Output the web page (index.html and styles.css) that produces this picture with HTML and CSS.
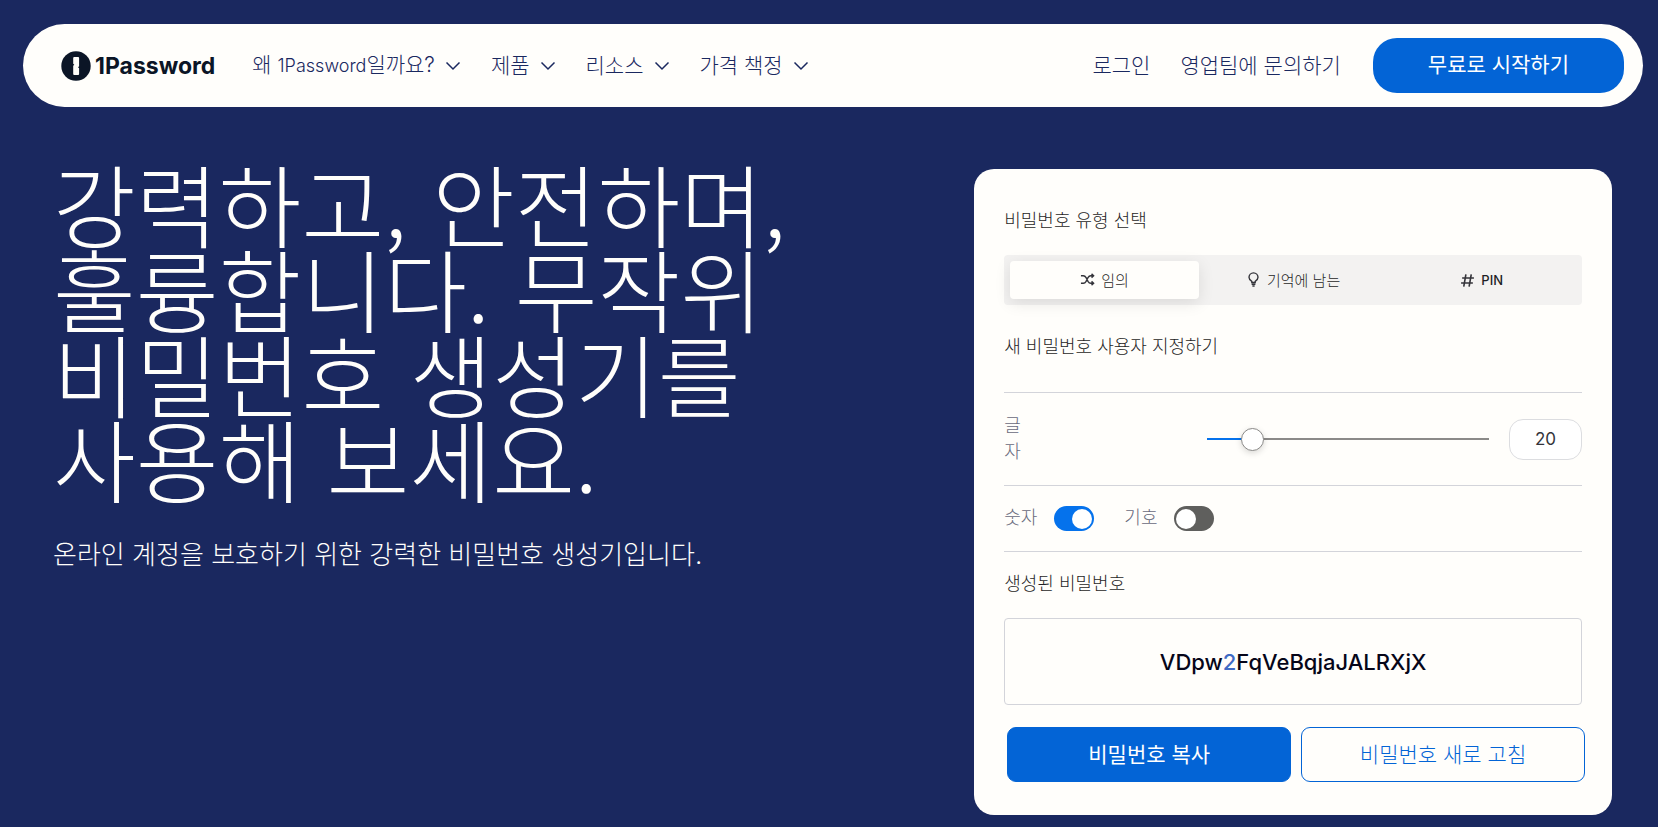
FILE: index.html
```
<!DOCTYPE html>
<html lang="ko">
<head>
    <meta charset="UTF-8">
    <meta name="viewport" content="width=device-width, initial-scale=1.0">
    <title>비밀번호 생성기 | 1Password</title>
    <link rel="stylesheet" href="styles.css">
</head>
<body>
    <header class="navbar">
        <a class="logo" href="#">
            <svg class="logo-mark" viewBox="0 0 30 30" aria-hidden="true">
                <circle cx="15" cy="15" r="14.7" fill="#0b1526"/>
                <path d="M13.2 6h3.900q1 0 1 1v8.200l-1.100 1 1.100 1V23q0 1-1 1h-3.900q-1 0-1-1v-8.200l1.100-1-1.100-1V7q0-1 1-1z" fill="#fffefb"/>
            </svg>
            <span>1Password</span>
        </a>
        <nav class="menu">
            <button class="menu-item">
                <span>왜 <span class="latin">1Password</span>일까요?</span>
                <svg class="chevron" viewBox="0 0 16 10"><path d="M1.500 1.500 8 8l6.500-6.500"/></svg>
            </button>
            <button class="menu-item">제품
                <svg class="chevron" viewBox="0 0 16 10"><path d="M1.500 1.500 8 8l6.500-6.500"/></svg>
            </button>
            <button class="menu-item">리소스
                <svg class="chevron" viewBox="0 0 16 10"><path d="M1.500 1.500 8 8l6.500-6.500"/></svg>
            </button>
            <button class="menu-item">가격 책정
                <svg class="chevron" viewBox="0 0 16 10"><path d="M1.500 1.500 8 8l6.500-6.500"/></svg>
            </button>
        </nav>
        <div class="actions">
            <a class="menu-item" href="#">로그인</a>
            <a class="menu-item" href="#">영업팀에 문의하기</a>
            <a class="cta" href="#">무료로 시작하기</a>
        </div>
    </header>

    <main class="hero">
        <section class="intro">
            <h1>강력하고, 안전하며, 훌륭합니다. 무작위 비밀번호 생성기를 사용해 보세요.</h1>
            <p>온라인 계정을 보호하기 위한 강력한 비밀번호 생성기입니다.</p>
        </section>

        <section class="generator">
            <h2>비밀번호 유형 선택</h2>
            <div class="tabs">
                <button class="tab active">
                    <svg class="tab-icon" viewBox="0 0 16 14" aria-hidden="true">
                        <path d="M1 3h2.500c1.500 0 2.300.8 3 2l2 4c.7 1.200 1.500 2 3 2H14M1 11h2.500c1.500 0 2.300-.8 3-2l2-4c.7-1.200 1.500-2 3-2H14M12.300 1 14.500 3l-2.200 2M12.300 9l2.200 2-2.200 2"/>
                    </svg>
                    임의
                </button>
                <button class="tab">
                    <svg class="tab-icon bulb" viewBox="0 0 12 16" aria-hidden="true">
                        <path d="M4.200 11.200V10C2.500 9 1.200 7.700 1.200 5.700a4.800 4.800 0 0 1 9.600 0c0 2-1.300 3.300-3 4.300v1.200zM4 13h4M4.800 15h2.400"/>
                    </svg>
                    기억에 남는
                </button>
                <button class="tab pin">
                    <svg class="tab-icon" viewBox="0 0 14 14" aria-hidden="true">
                        <path d="M5.500 1.200 3.500 12.800M10.500 1.200 8.500 12.800M2 4.700h11M1 9.300h11"/>
                    </svg>
                    PIN
                </button>
            </div>

            <h2>새 비밀번호 사용자 지정하기</h2>
            <div class="row length-row">
                <label class="length-label" for="length">글자</label>
                <input class="slider" id="length" type="range" min="8" max="100" value="20">
                <input class="length-value" type="text" value="20" aria-label="글자 수">
            </div>
            <div class="row toggle-row">
                <label class="toggle">숫자 <input type="checkbox" checked></label>
                <label class="toggle">기호 <input type="checkbox"></label>
            </div>

            <div class="result">
                <h2>생성된 비밀번호</h2>
                <output class="password">VDpw<span class="digit">2</span>FqVeBqjaJALRXjX</output>
            </div>
            <div class="buttons">
                <button class="btn primary">비밀번호 복사</button>
                <button class="btn">비밀번호 새로 고침</button>
            </div>
        </section>
    </main>
</body>
</html>
```
FILE: styles.css
```
* {
    margin: 0;
    padding: 0;
    box-sizing: border-box;
}

body {
    font-family: Inter, "Noto Sans CJK KR", sans-serif;
    background: #1a285f;
    color: #34343a;
    word-break: keep-all;
}

button,
input {
    font: inherit;
    color: inherit;
    border: 0;
    background: none;
}

a {
    color: inherit;
    text-decoration: none;
}

/* Navigation */
.navbar {
    display: flex;
    align-items: center;
    margin: 24px 15px 0 23px;
    padding: 14px 19px 14px 38px;
    background: #fffefb;
    border-radius: 42px;
    color: #1a285f;
}

.logo {
    display: flex;
    align-items: center;
    gap: 4px;
    color: #0b1526;
    font-size: 23px;
    font-weight: 700;
}

.logo-mark {
    width: 30px;
    height: 30px;
}

.menu,
.actions {
    display: flex;
    align-items: center;
    gap: 30px;
}

.menu {
    margin-left: 37px;
}

.actions {
    margin-left: auto;
}

.menu-item {
    display: flex;
    align-items: center;
    gap: 10px;
    font-size: 21px;
    font-weight: 300;
    line-height: 30px;
    white-space: nowrap;
}

.latin {
    font-size: 18px;
}

.chevron {
    width: 16px;
    height: 10px;
    fill: none;
    stroke: #1a285f;
    stroke-width: 1.5;
}

.cta {
    margin-left: 2px;
    padding: 0 55px 2px;
    background: #0364d6;
    border-radius: 24px;
    color: #fff;
    font-size: 21px;
    font-weight: 400;
    line-height: 53px;
    white-space: nowrap;
}

/* Hero */
.hero {
    display: grid;
    grid-template-columns: 13fr 9fr;
    align-items: start;
    padding: 62px 46px 12px 53px;
}

.intro {
    padding-right: 60px;
    color: #fffefb;
}

.intro h1 {
    margin-top: -9px;
    font-family: "Noto Sans CJK KR", sans-serif;
    font-size: 90px;
    font-weight: 300;
    line-height: 85px;
}

.intro p {
    margin-top: 35px;
    font-size: 26px;
    font-weight: 300;
    line-height: 40px;
}

/* Generator card */
.generator {
    padding: 38px 30px 33px;
    background: #fffefb;
    border-radius: 20px;
}

.generator h2 {
    color: #1f1f26;
    font-size: 18px;
    font-weight: 300;
    line-height: 28px;
}

.tabs {
    display: flex;
    margin: 20px 0 28px;
    padding: 6px;
    background: #f3f2f1;
    border-radius: 4px;
}

.tab {
    flex: 1;
    display: flex;
    align-items: center;
    justify-content: center;
    gap: 6px;
    height: 38px;
    padding-bottom: 2px;
    border-radius: 4px;
    color: #1f1f26;
    font-size: 15px;
    font-weight: 300;
}

.tab.active {
    background: #fffefb;
    box-shadow: 0 4px 16px rgba(0, 0, 0, 0.1);
}

.tab.pin {
    padding-bottom: 0;
    font-size: 13px;
    font-weight: 500;
}

.tab-icon {
    width: 15px;
    height: 15px;
    fill: none;
    stroke: #34343a;
    stroke-width: 1.5;
}

.row {
    display: flex;
    align-items: center;
    border-top: 1px solid #d3d4da;
    color: #696a7c;
    font-size: 18px;
    font-weight: 300;
}

.length-row {
    margin-top: 31px;
    padding: 20px 0;
}

.length-label {
    width: 18px;
    line-height: 26px;
    word-break: break-all;
}

.slider {
    appearance: none;
    flex: 1;
    height: 2px;
    margin: 0 20px 0 185px;
    background: linear-gradient(to right, #0572ec 15%, #8b8a88 15%);
}

.slider::-webkit-slider-thumb {
    appearance: none;
    width: 23px;
    height: 23px;
    background: #fff;
    border: 1px solid #8b8a88;
    border-radius: 50%;
    box-shadow: 0 2px 6px rgba(0, 0, 0, 0.15);
}

.length-value {
    width: 73px;
    height: 41px;
    background: #fff;
    border: 1px solid #dcdde0;
    border-radius: 14px;
    color: #34343a;
    font-size: 17px;
    font-weight: 400;
    text-align: center;
}

.toggle-row {
    gap: 30px;
    padding: 19px 0 20px;
    border-bottom: 1px solid #d3d4da;
}

.toggle {
    display: flex;
    align-items: center;
    gap: 17px;
    line-height: 26px;
}

.toggle input {
    appearance: none;
    width: 40px;
    height: 25px;
    padding: 3px 2px;
    background: #5f5f5d;
    border-radius: 13px;
}

.toggle input::before {
    content: "";
    display: block;
    width: 20px;
    height: 20px;
    background: #fff;
    border-radius: 50%;
}

.toggle input:checked {
    background: #0572ec;
}

.toggle input:checked::before {
    margin-left: auto;
}

.result {
    padding-top: 18px;
}

.password {
    display: block;
    margin-top: 20px;
    padding: 26px 10px 24px;
    border: 1px solid #d3d4da;
    border-radius: 4px;
    color: #060619;
    font-size: 22px;
    font-weight: 500;
    line-height: 35px;
    text-align: center;
}

.digit {
    color: #3f6bc4;
}

.buttons {
    display: flex;
    gap: 10px;
    margin: 22px -3px 0 3px;
}

.btn {
    flex: 1;
    height: 55px;
    padding-bottom: 4px;
    border: 1px solid #0364d6;
    border-radius: 9px;
    color: #0364d6;
    font-size: 21px;
    font-weight: 300;
}

.btn.primary {
    background: #0364d6;
    color: #fff;
    font-weight: 400;
}
```
